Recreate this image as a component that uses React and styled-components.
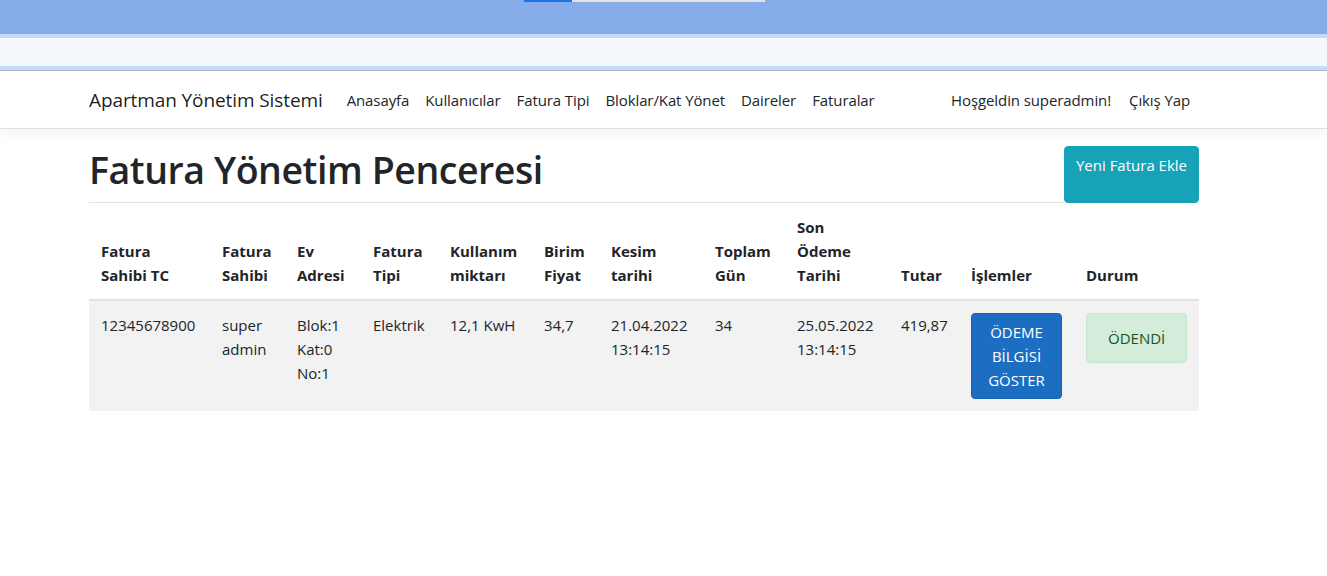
import React from "react";
import styled, { createGlobalStyle } from "styled-components";

const Global = createGlobalStyle`
  html, body { margin: 0; padding: 0; background: #fff; }
  body {
    font-family: "Open Sans", "Noto Sans", sans-serif;
    font-size: 15px;
    line-height: 24px;
    color: #212529;
  }
  * { box-sizing: border-box; }
`;

const Chrome = styled.div`
  display: flex;
  flex-direction: column;
`;

const TopBand = styled.div`
  height: 34px;
  background: #86ace9;
  display: flex;
  align-items: flex-start;
`;

const Progress = styled.div`
  margin-left: 524px;
  width: 241px;
  height: 2px;
  background: #e3e3e3;
  display: flex;
`;

const ProgressFill = styled.div`
  width: 48px;
  background: #1a73e8;
`;

const Strip = styled.div`
  height: ${(p) => p.$h}px;
  background: ${(p) => p.$bg};
`;

const Navbar = styled.header`
  background: #fff;
  border-bottom: 1px solid #dee2e6;
  box-shadow: 0 4px 12px rgba(0, 0, 0, 0.05);
`;

const Container = styled.div`
  width: 1110px;
  margin-left: 89px;
`;

const NavInner = styled(Container)`
  display: flex;
  align-items: center;
  padding: 9px 0 8px;
`;

const Brand = styled.a`
  font-size: 19px;
  line-height: 30px;
  padding: 5px 0;
  margin-right: 16px;
  color: rgba(0, 0, 0, 0.9);
  text-decoration: none;
  white-space: nowrap;
  letter-spacing: -0.1px;
`;

const NavList = styled.nav`
  display: flex;
  flex: 1;
`;

const NavLink = styled.a`
  padding: 8px;
  color: #212529;
  text-decoration: none;
  white-space: nowrap;
  letter-spacing: -0.1px;
`;

const RightNav = styled.div`
  display: flex;
  gap: ${(p) => p.$gap || 0}px;
  margin-right: 1px;
`;

const Main = styled(Container)`
  padding-top: 17px;
`;

const TitleRow = styled.div`
  display: flex;
  align-items: stretch;
`;

const Title = styled.h1`
  flex: 1;
  margin: 0;
  padding-bottom: 8px;
  font-size: 37.5px;
  line-height: 48px;
  font-weight: 600;
  letter-spacing: -0.45px;
  border-bottom: 1px solid #dee2e6;
`;

const InfoButton = styled.button`
  width: 135px;
  background: #17a2b8;
  border: 1px solid #17a2b8;
  color: #fff;
  font-family: inherit;
  font-size: 15px;
  line-height: 24px;
  padding: 6px 8px;
  border-radius: 4px;
  display: flex;
  justify-content: center;
  align-items: flex-start;
  white-space: nowrap;
`;

const Table = styled.table`
  width: 1110px;
  border-collapse: collapse;
  table-layout: fixed;
`;

const Th = styled.th`
  text-align: left;
  font-weight: 700;
  vertical-align: bottom;
  padding: 12px;
  border-bottom: 2px solid #dee2e6;
`;

const Row = styled.tr`
  background: #f2f2f2;
`;

const Td = styled.td`
  vertical-align: top;
  padding: 12px;
`;

const PrimaryButton = styled.button`
  background: #1b6ec2;
  border: 1px solid #1861ac;
  color: #fff;
  font-family: inherit;
  font-size: 15px;
  line-height: 24px;
  padding: 6px 12px;
  border-radius: 4px;
  text-align: center;
  width: 100%;
`;

const Alert = styled.div`
  display: inline-block;
  background: #d4edda;
  border: 1px solid #c3e6cb;
  color: #155724;
  padding: 12px 21px;
  border-radius: 4px;
`;

const columns = [
  { label: "Fatura Sahibi TC", w: 121 },
  { label: "Fatura Sahibi", w: 75 },
  { label: "Ev Adresi", w: 76 },
  { label: "Fatura Tipi", w: 77 },
  { label: "Kullanım miktarı", w: 94 },
  { label: "Birim Fiyat", w: 67 },
  { label: "Kesim tarihi", w: 104 },
  { label: "Toplam Gün", w: 82 },
  { label: "Son Ödeme Tarihi", w: 104 },
  { label: "Tutar", w: 70 },
  { label: "İşlemler", w: 115 },
  { label: "Durum", w: 125 },
];

export default function App() {
  return (
    <>
      <Global />
      <Chrome>
        <TopBand>
          <Progress>
            <ProgressFill />
          </Progress>
        </TopBand>
        <Strip $h={4} $bg="#c7dbf5" />
        <Strip $h={28} $bg="#f4f7fc" />
        <Strip $h={4} $bg="#c8dbf5" />
        <Strip $h={1} $bg="#a9b6ca" />
      </Chrome>
      <Navbar>
        <NavInner>
          <Brand href="#">Apartman Yönetim Sistemi</Brand>
          <NavList>
            <NavLink href="#">Anasayfa</NavLink>
            <NavLink href="#">Kullanıcılar</NavLink>
            <NavLink href="#">Fatura Tipi</NavLink>
            <NavLink href="#">Bloklar/Kat Yönet</NavLink>
            <NavLink href="#">Daireler</NavLink>
            <NavLink href="#">Faturalar</NavLink>
          </NavList>
          <RightNav $gap={2}>
            <NavLink href="#">Hoşgeldin superadmin!</NavLink>
            <NavLink href="#">Çıkış Yap</NavLink>
          </RightNav>
        </NavInner>
      </Navbar>
      <Main>
        <TitleRow>
          <Title>Fatura Yönetim Penceresi</Title>
          <InfoButton>Yeni Fatura Ekle</InfoButton>
        </TitleRow>
        <Table>
          <colgroup>
            {columns.map((c) => (
              <col key={c.label} style={{ width: c.w }} />
            ))}
          </colgroup>
          <thead>
            <tr>
              {columns.map((c) => (
                <Th key={c.label}>{c.label}</Th>
              ))}
            </tr>
          </thead>
          <tbody>
            <Row>
              <Td>12345678900</Td>
              <Td>super admin</Td>
              <Td>
                Blok:1
                <br />
                Kat:0
                <br />
                No:1
              </Td>
              <Td>Elektrik</Td>
              <Td>12,1 KwH</Td>
              <Td>34,7</Td>
              <Td>21.04.2022 13:14:15</Td>
              <Td>34</Td>
              <Td>25.05.2022 13:14:15</Td>
              <Td>419,87</Td>
              <Td>
                <PrimaryButton>ÖDEME BİLGİSİ GÖSTER</PrimaryButton>
              </Td>
              <Td>
                <Alert>ÖDENDİ</Alert>
              </Td>
            </Row>
          </tbody>
        </Table>
      </Main>
    </>
  );
}
